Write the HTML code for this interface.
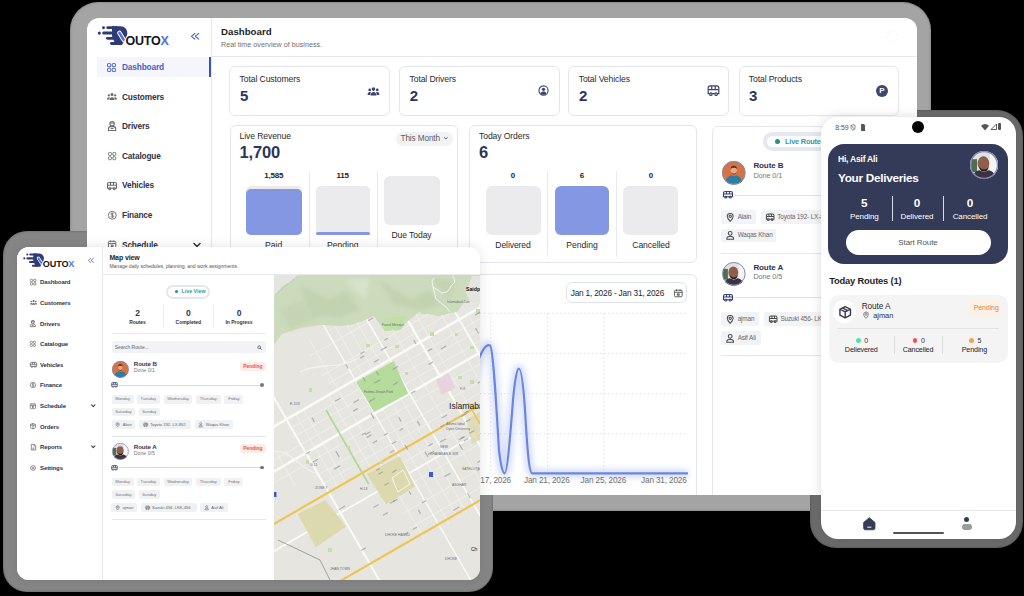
<!DOCTYPE html>
<html><head><meta charset="utf-8">
<style>
*{margin:0;padding:0;box-sizing:border-box}
html,body{width:1024px;height:596px;overflow:hidden;background:#000}
body{position:relative;font-family:"Liberation Sans",sans-serif;color:#222}
.a{position:absolute}
.t{position:absolute;line-height:1;white-space:nowrap}
.scr{position:absolute;overflow:hidden;background:#fff}
.in{position:absolute;left:0;top:0;width:1024px;height:596px}
.bz{position:absolute}
.card{position:absolute;border:1px solid #e4e6ee;border-radius:6px;background:#fff}
.hl{position:absolute;height:1px;background:#e8e9ef}
.vl{position:absolute;width:1px;background:#e8e9ef}
.chip{position:absolute;background:#f1f2f6;border-radius:2px}
svg{position:absolute;overflow:visible}
</style></head><body>

<!-- bezels -->
<div class="bz" style="left:69.5px;top:2px;width:861px;height:508.5px;border-radius:28px;background:#a4a4a4;box-shadow:inset 0 0 2.5px rgba(0,0,0,0.35)"></div>
<div class="bz" style="left:3px;top:231px;width:490px;height:361px;border-radius:24px;background:#868686;box-shadow:inset 0 0 2.5px rgba(0,0,0,0.35)"></div>
<div class="bz" style="left:810px;top:110px;width:213px;height:438px;border-radius:26px;background:#6c6c6c;box-shadow:inset 0 0 2.5px rgba(0,0,0,0.35)"></div>

<!-- TABLET -->
<div class="scr" id="tab" style="left:87px;top:18px;width:830px;height:477px;border-radius:12px">
<div class="in" style="left:-87px;top:-18px">
<div class="a" style="left:211.00px;top:18.00px;width:1.00px;height:477.00px;background:#e7e8ee;"></div>
<div class="a" style="left:211.00px;top:56.00px;width:706.00px;height:1.00px;background:#e7e8ee;"></div>
<svg style="left:96.00px;top:24.00px;" width="34" height="23" viewBox="96 24 34 23" preserveAspectRatio="none"><g fill="#2f3b78"><circle cx="103.5" cy="27.7" r="1.45"/><circle cx="99.3" cy="33.1" r="1.55"/><rect x="106.3" y="26.3" width="12" height="2.8" rx="1.4"/><rect x="102.2" y="31.6" width="12" height="3" rx="1.5"/><rect x="106" y="36.9" width="9" height="2.9" rx="1.45"/><rect x="110" y="42.1" width="9" height="2.9" rx="1.45"/><path d="M112 26.3H120.5C124.8 26.3 127.3 29.6 127.3 33.2C127.3 34.6 126.9 35.7 126.3 36.6L122 45H115.5L112 36Z"/></g><path d="M119.4 32.9L123.6 39.6" stroke="#fff" stroke-width="4.6" stroke-linecap="round"/><path d="M119.4 32.9L123.6 39.6" stroke="#4a6fe3" stroke-width="2.5" stroke-linecap="round"/></svg>
<div class="t" style="top:34.75px;font-size:12.5px;color:#151515;font-weight:bold;letter-spacing:-0.2px;left:125.40px;">OUTO<span style="color:#4f70e0">X</span></div>
<svg style="left:191.00px;top:33.20px;" width="8.2" height="6.6" viewBox="3 4 17 16" preserveAspectRatio="none"><g fill="none" stroke="#4a5fc1" stroke-width="2.3" stroke-linecap="round" stroke-linejoin="round"><path d="M11 5l-7 7 7 7M19 5l-7 7 7 7"/></g></svg>
<div class="t" style="top:26.65px;font-size:9.7px;color:#1e1e1e;font-weight:bold;left:221.00px;">Dashboard</div>
<div class="t" style="top:41.00px;font-size:7.2px;color:#707070;font-weight:normal;left:221.00px;">Real time overview of business.</div>
<div class="a" style="left:97.00px;top:57.00px;width:114.00px;height:20.00px;background:#f4f6fb;"></div>
<div class="a" style="left:208.50px;top:57.00px;width:2.50px;height:20.00px;background:#3d52b8;"></div>
<div class="t" style="top:62.95px;font-size:8.3px;color:#4a5fc1;font-weight:bold;letter-spacing:-0.15px;left:122.00px;">Dashboard</div>
<svg style="left:107.20px;top:62.60px;" width="9" height="9" viewBox="2 2 20 20" preserveAspectRatio="none"><g fill="none" stroke="#5a6fd0" stroke-width="2.3"><rect x="3" y="3" width="7.5" height="7.5" rx="3"/><rect x="13.5" y="3" width="7.5" height="7.5" rx="3"/><rect x="3" y="13.5" width="7.5" height="7.5" rx="3"/><rect x="13.5" y="13.5" width="7.5" height="7.5" rx="3"/></g></svg>
<div class="t" style="top:92.55px;font-size:8.3px;color:#2e3345;font-weight:bold;letter-spacing:-0.15px;left:122.00px;">Customers</div>
<svg style="left:107.00px;top:92.80px;" width="10" height="6.9" viewBox="1 4 22 15" preserveAspectRatio="none"><g fill="#6a6a6a"><circle cx="12" cy="7.5" r="3.3"/><circle cx="5" cy="9" r="2.5"/><circle cx="19" cy="9" r="2.5"/><path d="M6.5 19c0-3.5 2.5-6 5.5-6s5.5 2.5 5.5 6z"/><path d="M1 18c0-3 1.6-5 4-5 1 0 1.8.3 2.3.8C6.4 15 6 16.5 6 18z"/><path d="M23 18c0-3-1.6-5-4-5-1 0-1.8.3-2.3.8.9 1.2 1.3 2.7 1.3 4.2z"/></g></svg>
<div class="t" style="top:122.15px;font-size:8.3px;color:#2e3345;font-weight:bold;letter-spacing:-0.15px;left:122.00px;">Drivers</div>
<svg style="left:108.00px;top:121.10px;" width="8.2" height="10" viewBox="3.5 2.5 17 20.5" preserveAspectRatio="none"><g fill="none" stroke="#6a6a6a" stroke-width="2.3"><circle cx="12" cy="8" r="4.5"/><path d="M7.5 6.5h9"/><path d="M4.5 22v-3.5c0-2.5 2-4.5 4.5-4.5h6c2.5 0 4.5 2 4.5 4.5V22z"/><path d="M9 18h6"/></g></svg>
<div class="t" style="top:151.75px;font-size:8.3px;color:#2e3345;font-weight:bold;letter-spacing:-0.15px;left:122.00px;">Catalogue</div>
<svg style="left:107.80px;top:151.90px;" width="8.2" height="8.2" viewBox="2 2 20 20" preserveAspectRatio="none"><g fill="none" stroke="#6a6a6a" stroke-width="2.3"><rect x="3" y="3" width="7.5" height="7.5" rx="3"/><rect x="13.5" y="3" width="7.5" height="7.5" rx="3"/><rect x="3" y="13.5" width="7.5" height="7.5" rx="3"/><rect x="13.5" y="13.5" width="7.5" height="7.5" rx="3"/></g></svg>
<div class="t" style="top:181.35px;font-size:8.3px;color:#2e3345;font-weight:bold;letter-spacing:-0.15px;left:122.00px;">Vehicles</div>
<svg style="left:107.00px;top:182.00px;" width="10" height="8.2" viewBox="2 3.5 20 17.5" preserveAspectRatio="none"><g fill="none" stroke="#6a6a6a" stroke-width="2.3"><path d="M3 17V8c0-2 1.5-3.5 3.5-3.5h11C19.5 4.5 21 6 21 8v9z"/><path d="M3 10.5h18M9 4.5v6M15 4.5v6"/><circle cx="7.5" cy="18" r="2" fill="#fff"/><circle cx="16.5" cy="18" r="2" fill="#fff"/></g></svg>
<div class="t" style="top:210.95px;font-size:8.3px;color:#2e3345;font-weight:bold;letter-spacing:-0.15px;left:122.00px;">Finance</div>
<svg style="left:107.80px;top:211.00px;" width="8.6" height="8.6" viewBox="1.6 1.6 20.8 20.8" preserveAspectRatio="none"><g fill="none" stroke="#6a6a6a" stroke-width="2.3"><circle cx="12" cy="12" r="9.5"/><path d="M15 9c-.5-1.2-1.6-2-3-2-1.8 0-3 1-3 2.4 0 3.1 6 1.7 6 4.9 0 1.4-1.3 2.5-3 2.5-1.5 0-2.7-.8-3.1-2M12 5.5v13"/></g></svg>
<div class="t" style="top:240.55px;font-size:8.3px;color:#2e3345;font-weight:bold;letter-spacing:-0.15px;left:122.00px;">Schedule</div>
<svg style="left:108.00px;top:240.20px;" width="8.2" height="8.6" viewBox="2.5 2 19 20" preserveAspectRatio="none"><g fill="none" stroke="#6a6a6a" stroke-width="2.3"><rect x="3.5" y="5" width="17" height="16" rx="2.5"/><path d="M3.5 10h17M8 3v4M16 3v4"/><rect x="10" y="14" width="4" height="3"/></g></svg>
<svg style="left:193.00px;top:241.70px;" width="8" height="6" viewBox="4 6 16 12" preserveAspectRatio="none"><path d="M6 9l6 6 6-6" fill="none" stroke="#333" stroke-width="3" stroke-linecap="round" stroke-linejoin="round"/></svg>
<div class="a" style="left:229.30px;top:66.30px;width:160.50px;height:49.40px;background:#fff;border-radius:6px;border:1px solid #e3e5ed;"></div>
<div class="t" style="top:74.90px;font-size:8.6px;color:#2a2a2a;font-weight:normal;letter-spacing:-0.1px;left:239.60px;">Total Customers</div>
<div class="t" style="top:88.30px;font-size:15px;color:#2b3562;font-weight:bold;left:239.90px;">5</div>
<div class="a" style="left:399.20px;top:66.30px;width:160.50px;height:49.40px;background:#fff;border-radius:6px;border:1px solid #e3e5ed;"></div>
<div class="t" style="top:74.90px;font-size:8.6px;color:#2a2a2a;font-weight:normal;letter-spacing:-0.1px;left:409.50px;">Total Drivers</div>
<div class="t" style="top:88.30px;font-size:15px;color:#2b3562;font-weight:bold;left:409.80px;">2</div>
<div class="a" style="left:568.40px;top:66.30px;width:160.50px;height:49.40px;background:#fff;border-radius:6px;border:1px solid #e3e5ed;"></div>
<div class="t" style="top:74.90px;font-size:8.6px;color:#2a2a2a;font-weight:normal;letter-spacing:-0.1px;left:578.70px;">Total Vehicles</div>
<div class="t" style="top:88.30px;font-size:15px;color:#2b3562;font-weight:bold;left:579.00px;">2</div>
<div class="a" style="left:738.50px;top:66.30px;width:160.50px;height:49.40px;background:#fff;border-radius:6px;border:1px solid #e3e5ed;"></div>
<div class="t" style="top:74.90px;font-size:8.6px;color:#2a2a2a;font-weight:normal;letter-spacing:-0.1px;left:748.80px;">Total Products</div>
<div class="t" style="top:88.30px;font-size:15px;color:#2b3562;font-weight:bold;left:749.10px;">3</div>
<svg style="left:366.50px;top:86.00px;" width="13" height="10" viewBox="0 2 24 18" preserveAspectRatio="none"><g fill="#3a4470"><circle cx="12" cy="7.5" r="3.3"/><circle cx="5" cy="9" r="2.5"/><circle cx="19" cy="9" r="2.5"/><path d="M6.5 19c0-3.5 2.5-6 5.5-6s5.5 2.5 5.5 6z"/><path d="M1 18c0-3 1.6-5 4-5 1 0 1.8.3 2.3.8C6.4 15 6 16.5 6 18z"/><path d="M23 18c0-3-1.6-5-4-5-1 0-1.8.3-2.3.8.9 1.2 1.3 2.7 1.3 4.2z"/></g></svg>
<svg style="left:537.50px;top:85.00px;" width="11" height="11" viewBox="0 0 24 24" preserveAspectRatio="none"><circle cx="12" cy="12" r="10" fill="none" stroke="#3a4470" stroke-width="2.4"/><circle cx="12" cy="9.5" r="3.5" fill="#3a4470"/><path d="M5.5 18c1.5-3 3.8-4 6.5-4s5 1 6.5 4c-1.5 1.8-4 3-6.5 3s-5-1.2-6.5-3z" fill="#3a4470"/></svg>
<svg style="left:706.50px;top:85.00px;" width="13" height="11" viewBox="1 3 22 18" preserveAspectRatio="none"><g fill="none" stroke="#3a4470" stroke-width="2"><path d="M3 17V8c0-2 1.5-3.5 3.5-3.5h11C19.5 4.5 21 6 21 8v9z"/><path d="M3 10.5h18M9 4.5v6M15 4.5v6"/><circle cx="7.5" cy="18" r="2" fill="#fff"/><circle cx="16.5" cy="18" r="2" fill="#fff"/></g></svg>
<div class="a" style="left:876px;top:85px;width:12px;height:12px;border-radius:50%;background:#3d4673;color:#fff;font:bold 8px/12px 'Liberation Sans';text-align:center">P</div>
<div class="a" style="left:886px;top:31px;width:12px;height:12px;border-radius:50%;border:1px dashed #f6f6f6"></div>
<div class="a" style="left:229.80px;top:125.40px;width:228.70px;height:137.60px;background:#fff;border-radius:6px;border:1px solid #e3e5ed;"></div>
<div class="t" style="top:132.20px;font-size:8.6px;color:#2a2a2a;font-weight:normal;letter-spacing:-0.1px;left:239.50px;">Live Revenue</div>
<div class="t" style="top:144.15px;font-size:16.5px;color:#2b3562;font-weight:bold;letter-spacing:-0.2px;left:239.60px;">1,700</div>
<div class="a" style="left:396.00px;top:131.50px;width:57.00px;height:14.00px;background:#f1f2f5;border-radius:7px;"></div>
<div class="t" style="top:134.60px;font-size:8.2px;color:#5a5a5a;font-weight:normal;letter-spacing:-0.1px;left:400.50px;">This Month</div>
<svg style="left:443.60px;top:136.80px;" width="3.8" height="2.6" viewBox="4 6 16 12" preserveAspectRatio="none"><path d="M6 9l6 6 6-6" fill="none" stroke="#555" stroke-width="4" stroke-linecap="round" stroke-linejoin="round"/></svg>
<div class="a" style="left:309.00px;top:170.70px;width:1.00px;height:86.30px;background:#e8e9f0;"></div>
<div class="a" style="left:377.40px;top:170.70px;width:1.00px;height:86.30px;background:#e8e9f0;"></div>
<div class="t" style="top:172.10px;font-size:8px;color:#1e1e1e;font-weight:bold;letter-spacing:-0.2px;left:-26.30px;width:600px;text-align:center;">1,585</div>
<div class="t" style="top:172.10px;font-size:8px;color:#1e1e1e;font-weight:bold;letter-spacing:-0.2px;left:42.70px;width:600px;text-align:center;">115</div>
<div class="a" style="left:246.30px;top:186.00px;width:55.40px;height:48.60px;background:#efe9ea;border-radius:5px;"></div>
<div class="a" style="left:246.30px;top:188.80px;width:55.40px;height:45.80px;background:#8497e2;border-radius:5px;"></div>
<div class="a" style="left:316.00px;top:186.00px;width:54.00px;height:48.60px;background:#ebebee;border-radius:5px;"></div>
<div class="a" style="left:316.00px;top:231.80px;width:54.00px;height:2.80px;background:#8497e2;border-radius:1.5px;"></div>
<div class="a" style="left:384.00px;top:175.60px;width:55.50px;height:49.40px;background:#ebebee;border-radius:6px;"></div>
<div class="t" style="top:241.20px;font-size:8.6px;color:#2a2a2a;font-weight:normal;left:-26.30px;width:600px;text-align:center;">Paid</div>
<div class="t" style="top:241.20px;font-size:8.6px;color:#2a2a2a;font-weight:normal;left:42.70px;width:600px;text-align:center;">Pending</div>
<div class="t" style="top:230.50px;font-size:8.6px;color:#2a2a2a;font-weight:normal;letter-spacing:-0.1px;left:111.50px;width:600px;text-align:center;">Due Today</div>
<div class="a" style="left:468.50px;top:125.40px;width:228.50px;height:137.60px;background:#fff;border-radius:6px;border:1px solid #e3e5ed;"></div>
<div class="t" style="top:132.20px;font-size:8.6px;color:#2a2a2a;font-weight:normal;letter-spacing:-0.1px;left:479.00px;">Today Orders</div>
<div class="t" style="top:144.15px;font-size:16.5px;color:#2b3562;font-weight:bold;left:479.00px;">6</div>
<div class="a" style="left:547.30px;top:170.70px;width:1.00px;height:86.30px;background:#e8e9f0;"></div>
<div class="a" style="left:616.00px;top:170.70px;width:1.00px;height:86.30px;background:#e8e9f0;"></div>
<div class="t" style="top:172.10px;font-size:8px;color:#1e1e1e;font-weight:bold;left:213.00px;width:600px;text-align:center;">0</div>
<div class="t" style="top:172.10px;font-size:8px;color:#1e1e1e;font-weight:bold;left:282.00px;width:600px;text-align:center;">6</div>
<div class="t" style="top:172.10px;font-size:8px;color:#1e1e1e;font-weight:bold;left:351.00px;width:600px;text-align:center;">0</div>
<div class="a" style="left:485.60px;top:186.00px;width:55.40px;height:48.60px;background:#ebebee;border-radius:6px;"></div>
<div class="a" style="left:554.70px;top:186.00px;width:54.60px;height:48.60px;background:#8497e2;border-radius:6px;"></div>
<div class="a" style="left:623.40px;top:186.00px;width:54.90px;height:48.60px;background:#ebebee;border-radius:6px;"></div>
<div class="t" style="top:241.20px;font-size:8.6px;color:#2a2a2a;font-weight:normal;letter-spacing:-0.1px;left:213.00px;width:600px;text-align:center;">Delivered</div>
<div class="t" style="top:241.20px;font-size:8.6px;color:#2a2a2a;font-weight:normal;left:282.00px;width:600px;text-align:center;">Pending</div>
<div class="t" style="top:241.20px;font-size:8.6px;color:#2a2a2a;font-weight:normal;letter-spacing:-0.1px;left:351.00px;width:600px;text-align:center;">Cancelled</div>
<div class="a" style="left:229.80px;top:274.00px;width:467.50px;height:246.00px;background:#fff;border-radius:6px;border:1px solid #e3e5ed;"></div>
<div class="a" style="left:565.60px;top:282.00px;width:121.40px;height:21.40px;background:#fff;border-radius:6px;border:1px solid #e1e3ea;"></div>
<div class="t" style="top:289.05px;font-size:8.3px;color:#262626;font-weight:normal;letter-spacing:-0.2px;left:570.70px;">Jan 1, 2026 - Jan 31, 2026</div>
<svg style="left:673.80px;top:288.80px;" width="8.6" height="8.2" viewBox="2.5 2 19 20" preserveAspectRatio="none"><g fill="none" stroke="#555" stroke-width="2.2"><rect x="3.5" y="5" width="17" height="16" rx="2.5"/><path d="M3.5 10h17M8 3v4M16 3v4"/><rect x="10" y="14" width="4" height="3"/></g></svg>
<svg style="left:0.00px;top:0.00px;" width="1024" height="596" viewBox="0 0 1024 596" preserveAspectRatio="none"><line x1="240" y1="313.2" x2="688" y2="313.2" stroke="#dedfe6" stroke-width="1" stroke-dasharray="1.5 2.5"/><line x1="240" y1="353.4" x2="688" y2="353.4" stroke="#dedfe6" stroke-width="1" stroke-dasharray="1.5 2.5"/><line x1="240" y1="393.7" x2="688" y2="393.7" stroke="#dedfe6" stroke-width="1" stroke-dasharray="1.5 2.5"/><line x1="240" y1="433.7" x2="688" y2="433.7" stroke="#dedfe6" stroke-width="1" stroke-dasharray="1.5 2.5"/><line x1="264" y1="313" x2="264" y2="473" stroke="#dedfe6" stroke-width="1" stroke-dasharray="1.5 2.5"/><line x1="320" y1="313" x2="320" y2="473" stroke="#dedfe6" stroke-width="1" stroke-dasharray="1.5 2.5"/><line x1="377" y1="313" x2="377" y2="473" stroke="#dedfe6" stroke-width="1" stroke-dasharray="1.5 2.5"/><line x1="434" y1="313" x2="434" y2="473" stroke="#dedfe6" stroke-width="1" stroke-dasharray="1.5 2.5"/><line x1="490.7" y1="313" x2="490.7" y2="473" stroke="#dedfe6" stroke-width="1" stroke-dasharray="1.5 2.5"/><line x1="547.6" y1="313" x2="547.6" y2="473" stroke="#dedfe6" stroke-width="1" stroke-dasharray="1.5 2.5"/><line x1="603.7" y1="313" x2="603.7" y2="473" stroke="#dedfe6" stroke-width="1" stroke-dasharray="1.5 2.5"/><defs><filter id="glow" x="-20%" y="-20%" width="140%" height="140%"><feGaussianBlur stdDeviation="3"/></filter></defs><path d="M462 430 C470 390 476 362 482 352 C485 346 488 344.5 490 345.4 C493 347 496 400 499 450 C501 468 503 473.4 504.6 473.4 C507 473.4 510 440 513 400 C515 378 517 368.5 518.8 368.5 C521 368.5 523 380 525 410 C527 445 529 473.4 532.2 473.4 L688 473.4" fill="none" stroke="#c9d3f6" stroke-width="8" stroke-linejoin="round" filter="url(#glow)" opacity="0.8"/><path d="M462 430 C470 390 476 362 482 352 C485 346 488 344.5 490 345.4 C493 347 496 400 499 450 C501 468 503 473.4 504.6 473.4 C507 473.4 510 440 513 400 C515 378 517 368.5 518.8 368.5 C521 368.5 523 380 525 410 C527 445 529 473.4 532.2 473.4 L688 473.4" fill="none" stroke="#6a86e2" stroke-width="2.2" stroke-linejoin="round"/></svg>
<div class="t" style="top:476.80px;font-size:8.2px;color:#707070;font-weight:normal;letter-spacing:-0.15px;left:-89.00px;width:600px;text-align:right;">Jan 17, 2026</div>
<div class="t" style="top:476.80px;font-size:8.2px;color:#707070;font-weight:normal;letter-spacing:-0.15px;left:246.80px;width:600px;text-align:center;">Jan 21, 2026</div>
<div class="t" style="top:476.80px;font-size:8.2px;color:#707070;font-weight:normal;letter-spacing:-0.15px;left:303.40px;width:600px;text-align:center;">Jan 25, 2026</div>
<div class="t" style="top:476.80px;font-size:8.2px;color:#707070;font-weight:normal;letter-spacing:-0.15px;left:86.60px;width:600px;text-align:right;">Jan 31, 2026</div>
<div class="a" style="left:711.50px;top:125.60px;width:187.50px;height:394.40px;background:#fff;border-radius:6px;border:1px solid #e3e5ed;"></div>
<div class="a" style="left:763.00px;top:131.70px;width:87.00px;height:19.00px;background:#fff;border-radius:10px;border:4px solid #e5e7f1;"></div>
<div class="a" style="left:775.10px;top:138.50px;width:5.00px;height:5.00px;background:#2e8d89;border-radius:3px;"></div>
<div class="t" style="top:137.50px;font-size:7.4px;color:#3a9b96;font-weight:bold;letter-spacing:-0.2px;left:785.00px;">Live Route</div>
<svg style="left:721.9000000000001px;top:160.89999999999998px" width="23.6" height="23.6" viewBox="0 0 24 24"><defs><clipPath id="cb733172"><circle cx="12" cy="12" r="12"/></clipPath></defs><g clip-path="url(#cb733172)"><rect width="24" height="24" fill="#d8733f"/><path d="M3 26C3 18 6 15.5 9.5 14.5L12 15.5 14.5 14.5C18 15.5 21 18 21 26Z" fill="#2f7d9e"/><ellipse cx="12" cy="9.5" rx="3.1" ry="3.8" fill="#e2a98c"/><path d="M8.8 8.5C8.8 5.5 10.3 4.8 12 4.8S15.2 5.5 15.2 8.5C14.5 7.2 13.5 6.8 12 6.8S9.5 7.2 8.8 8.5Z" fill="#4a2e22"/><path d="M9.2 11C9.6 13 10.6 13.8 12 13.8S14.4 13 14.8 11C14.2 12.4 13.3 12.8 12 12.8S9.8 12.4 9.2 11Z" fill="#5a3a2a"/></g><circle cx="12" cy="12" r="11.5" fill="none" stroke="#7d8cc0" stroke-width="1"/></svg>
<div class="t" style="top:162.20px;font-size:8.0px;color:#2d3358;font-weight:bold;letter-spacing:-0.1px;left:753.40px;">Route B</div>
<div class="t" style="top:172.05px;font-size:7.3px;color:#777;font-weight:normal;letter-spacing:-0.1px;left:753.40px;">Done 0/1</div>
<svg style="left:722.80px;top:191.40px;" width="10" height="7.5" viewBox="2 3.5 20 17.5" preserveAspectRatio="none"><g fill="none" stroke="#3a4470" stroke-width="2.4"><path d="M3 17V8c0-2 1.5-3.5 3.5-3.5h11C19.5 4.5 21 6 21 8v9z"/><path d="M3 10.5h18M9 4.5v6M15 4.5v6"/><circle cx="7.5" cy="18" r="2" fill="#fff"/><circle cx="16.5" cy="18" r="2" fill="#fff"/></g></svg>
<div class="a" style="left:735.00px;top:194.50px;width:165.00px;height:1.00px;background:#e2e3e9;"></div>
<div class="a" style="left:721.20px;top:210.00px;width:34.40px;height:13.50px;background:#f2f3f6;border-radius:2px;"></div>
<svg style="left:726.40px;top:212.60px;" width="8.4" height="8.4" viewBox="2 2 20 20" preserveAspectRatio="none"><g fill="none" stroke="#4a4a4a" stroke-width="2.4"><path d="M12 22s-7-6.5-7-12a7 7 0 0 1 14 0c0 5.5-7 12-7 12z"/><circle cx="12" cy="10" r="2.8"/></g></svg>
<div class="t" style="top:213.70px;font-size:6.4px;color:#666;font-weight:normal;letter-spacing:-0.15px;left:737.70px;">Alain</div>
<div class="a" style="left:760.80px;top:210.00px;width:79.20px;height:13.50px;background:#f2f3f6;border-radius:2px;"></div>
<svg style="left:766.00px;top:212.60px;" width="8.4" height="8.4" viewBox="2 2 20 20" preserveAspectRatio="none"><g fill="none" stroke="#4a4a4a" stroke-width="2.4"><path d="M3 17V8c0-2 1.5-3.5 3.5-3.5h11C19.5 4.5 21 6 21 8v9z"/><path d="M3 10.5h18M9 4.5v6M15 4.5v6"/><circle cx="7.5" cy="18" r="2" fill="#fff"/><circle cx="16.5" cy="18" r="2" fill="#fff"/></g></svg>
<div class="t" style="top:213.70px;font-size:6.4px;color:#666;font-weight:normal;letter-spacing:-0.15px;left:777.30px;">Toyota 192- LX-852</div>
<div class="a" style="left:721.20px;top:228.70px;width:54.80px;height:13.50px;background:#f2f3f6;border-radius:2px;"></div>
<svg style="left:726.40px;top:231.30px;" width="8.4" height="8.4" viewBox="2 2 20 20" preserveAspectRatio="none"><g fill="none" stroke="#4a4a4a" stroke-width="2.4"><circle cx="12" cy="7.5" r="4.5"/><path d="M4 21.5v-1c0-3 2.5-5.5 5.5-5.5h5c3 0 5.5 2.5 5.5 5.5v1z"/></g></svg>
<div class="t" style="top:232.40px;font-size:6.4px;color:#666;font-weight:normal;letter-spacing:-0.15px;left:737.70px;">Waqas Khan</div>
<div class="a" style="left:721.00px;top:252.80px;width:179.00px;height:1.00px;background:#e6e7ec;"></div>
<svg style="left:721.9000000000001px;top:262.2px" width="23.6" height="23.6" viewBox="0 0 24 24"><defs><clipPath id="ca733274"><circle cx="12" cy="12" r="12"/></clipPath></defs><g clip-path="url(#ca733274)"><rect width="24" height="24" fill="#dfe3e0"/><rect x="1" y="7" width="5" height="11" fill="#4d6e50"/><rect x="17" y="2" width="7" height="20" fill="#f4f5f4"/><path d="M2 26C2 19 5 17 8 16.5L12 18 16 16.5C19 17 22 19 22 26Z" fill="#3a3344"/><ellipse cx="11.5" cy="10.8" rx="5" ry="6.2" fill="#8f5e4a"/><path d="M8 13C8.5 16.5 10 17.5 12 17.5S15.5 16.5 16 13C15 15 13.8 15.8 12 15.8S9 15 8 13Z" fill="#2a1e1a"/></g><circle cx="12" cy="12" r="11.5" fill="none" stroke="#8a86b8" stroke-width="1"/></svg>
<div class="t" style="top:263.50px;font-size:8.0px;color:#2d3358;font-weight:bold;letter-spacing:-0.1px;left:753.40px;">Route A</div>
<div class="t" style="top:273.35px;font-size:7.3px;color:#777;font-weight:normal;letter-spacing:-0.1px;left:753.40px;">Done 0/5</div>
<svg style="left:722.80px;top:293.80px;" width="10" height="7.5" viewBox="2 3.5 20 17.5" preserveAspectRatio="none"><g fill="none" stroke="#3a4470" stroke-width="2.4"><path d="M3 17V8c0-2 1.5-3.5 3.5-3.5h11C19.5 4.5 21 6 21 8v9z"/><path d="M3 10.5h18M9 4.5v6M15 4.5v6"/><circle cx="7.5" cy="18" r="2" fill="#fff"/><circle cx="16.5" cy="18" r="2" fill="#fff"/></g></svg>
<div class="a" style="left:735.00px;top:296.90px;width:165.00px;height:1.00px;background:#e2e3e9;"></div>
<div class="a" style="left:721.20px;top:312.40px;width:38.10px;height:13.50px;background:#f2f3f6;border-radius:2px;"></div>
<svg style="left:726.40px;top:315.00px;" width="8.4" height="8.4" viewBox="2 2 20 20" preserveAspectRatio="none"><g fill="none" stroke="#4a4a4a" stroke-width="2.4"><path d="M12 22s-7-6.5-7-12a7 7 0 0 1 14 0c0 5.5-7 12-7 12z"/><circle cx="12" cy="10" r="2.8"/></g></svg>
<div class="t" style="top:316.10px;font-size:6.4px;color:#666;font-weight:normal;letter-spacing:-0.15px;left:737.70px;">ajman</div>
<div class="a" style="left:764.00px;top:312.40px;width:86.00px;height:13.50px;background:#f2f3f6;border-radius:2px;"></div>
<svg style="left:769.20px;top:315.00px;" width="8.4" height="8.4" viewBox="2 2 20 20" preserveAspectRatio="none"><g fill="none" stroke="#4a4a4a" stroke-width="2.4"><path d="M3 17V8c0-2 1.5-3.5 3.5-3.5h11C19.5 4.5 21 6 21 8v9z"/><path d="M3 10.5h18M9 4.5v6M15 4.5v6"/><circle cx="7.5" cy="18" r="2" fill="#fff"/><circle cx="16.5" cy="18" r="2" fill="#fff"/></g></svg>
<div class="t" style="top:316.10px;font-size:6.4px;color:#666;font-weight:normal;letter-spacing:-0.15px;left:780.50px;">Suzuki 456- LKK-456</div>
<div class="a" style="left:721.20px;top:331.10px;width:39.60px;height:13.50px;background:#f2f3f6;border-radius:2px;"></div>
<svg style="left:726.40px;top:333.70px;" width="8.4" height="8.4" viewBox="2 2 20 20" preserveAspectRatio="none"><g fill="none" stroke="#4a4a4a" stroke-width="2.4"><circle cx="12" cy="7.5" r="4.5"/><path d="M4 21.5v-1c0-3 2.5-5.5 5.5-5.5h5c3 0 5.5 2.5 5.5 5.5v1z"/></g></svg>
<div class="t" style="top:334.80px;font-size:6.4px;color:#666;font-weight:normal;letter-spacing:-0.15px;left:737.70px;">Asif Ali</div>
<div class="a" style="left:721.00px;top:354.60px;width:179.00px;height:1.00px;background:#e6e7ec;"></div>
</div></div>

<!-- SMALL DEVICE -->
<div class="scr" id="sm" style="box-shadow:0 0 12px rgba(40,40,60,0.14);left:17px;top:247px;width:463px;height:333px;border-radius:12px">
<div class="in" style="left:-17px;top:-247px">
<svg style="left:0.00px;top:0.00px;" width="1024" height="596" viewBox="0 0 1024 596" preserveAspectRatio="none"><defs><clipPath id="mapc"><rect x="274" y="274.5" width="206" height="306"/></clipPath><clipPath id="lowc"><path d="M274 345L282 334 300 328 321 325 340 326 350 325 363 321 373.5 316 385 331 400 328 419 312 438 316 457 312 480 304V580H274Z"/></clipPath><filter id="blur1"><feGaussianBlur stdDeviation="2.2"/></filter></defs><g clip-path="url(#mapc)"><rect x="274" y="274" width="206" height="306" fill="#e6e5e0"/><path d="M274 296L290 277 300 274H480V300L470 302 466 300 457 312 438 316 419 312 400 328 385 331 373.5 316 363 321 350 325 340 326 321 325 300 328 282 334 274 345Z" fill="#cddbbd"/><g filter="url(#blur1)" opacity="0.55"><path d="M300 285L330 300 345 290 360 310 340 318 310 315Z" fill="#b9cca6"/><path d="M380 280L410 300 430 290 440 305 420 310 395 305Z" fill="#b9cca6"/><path d="M280 310L300 300 320 318 290 330Z" fill="#bfd0ab"/><path d="M345 280L370 278 365 300Z" fill="#e0e9d6"/><path d="M430 278L455 280 450 300Z" fill="#bccfa9"/></g><path d="M274 274H300L290 282 274 290Z" fill="#e4e5e0"/><path d="M472 276H480V300L470 302 466 292Z" fill="#e4e5e0"/><path d="M453 276L455 282 452 285 447 292 442 293 433 287 432 281 434 278M433 287L436 299 446 307 450 312" stroke="#f2f5ee" stroke-width="1" fill="none"/><path d="M385 318L405 316 402 330 384 331Z" fill="#bfe0a5"/><path d="M300 274L274 296" stroke="#9aa8b8" stroke-width="0.6" stroke-dasharray="1 1"/><defs><clipPath id="cityc"><polygon points="283.5,421.0 524.2,282.0 566.5,355.1 325.7,494.1" fill="#000" /><polygon points="302.9,342.7 495.2,231.7 524.2,282.0 331.9,393.0" fill="#000" /><polygon points="374.2,466.1 566.5,355.1 610.2,430.9 417.9,541.9" fill="#000" /><polygon points="249.4,466.0 294.5,440.0 314.5,474.7 269.4,500.7" fill="#000" /></clipPath></defs><g clip-path="url(#lowc)"><g clip-path="url(#cityc)"><line x1="156.3" y1="444.7" x2="502.7" y2="244.7" stroke="#f1f1ee" stroke-width="0.9"/><line x1="167.8" y1="464.6" x2="514.2" y2="264.6" stroke="#f1f1ee" stroke-width="0.9"/><line x1="172.8" y1="473.3" x2="519.2" y2="273.3" stroke="#f1f1ee" stroke-width="0.9"/><line x1="182.8" y1="490.6" x2="529.2" y2="290.6" stroke="#f1f1ee" stroke-width="0.9"/><line x1="187.3" y1="498.4" x2="533.7" y2="298.4" stroke="#f1f1ee" stroke-width="0.9"/><line x1="192.3" y1="507.1" x2="538.7" y2="307.1" stroke="#f1f1ee" stroke-width="0.9"/><line x1="202.3" y1="524.4" x2="548.7" y2="324.4" stroke="#f1f1ee" stroke-width="0.9"/><line x1="209.8" y1="537.4" x2="556.2" y2="337.4" stroke="#f1f1ee" stroke-width="0.9"/><line x1="214.8" y1="546.1" x2="561.2" y2="346.1" stroke="#f1f1ee" stroke-width="0.9"/><line x1="225.8" y1="565.1" x2="572.2" y2="365.1" stroke="#f1f1ee" stroke-width="0.9"/><line x1="236.8" y1="584.2" x2="583.2" y2="384.2" stroke="#f1f1ee" stroke-width="0.9"/><line x1="247.8" y1="603.2" x2="594.2" y2="403.2" stroke="#f1f1ee" stroke-width="0.9"/><line x1="255.8" y1="617.1" x2="602.2" y2="417.1" stroke="#f1f1ee" stroke-width="0.9"/><line x1="266.8" y1="636.1" x2="613.2" y2="436.1" stroke="#f1f1ee" stroke-width="0.9"/><line x1="272.8" y1="646.5" x2="619.2" y2="446.5" stroke="#f1f1ee" stroke-width="0.9"/><line x1="220.4" y1="355.8" x2="390.4" y2="650.2" stroke="#f1f1ee" stroke-width="0.9"/><line x1="251.6" y1="337.8" x2="421.6" y2="632.2" stroke="#f1f1ee" stroke-width="0.9"/><line x1="259.4" y1="333.3" x2="429.4" y2="627.7" stroke="#f1f1ee" stroke-width="0.9"/><line x1="284.5" y1="318.8" x2="454.5" y2="613.2" stroke="#f1f1ee" stroke-width="0.9"/><line x1="294.0" y1="313.3" x2="464.0" y2="607.7" stroke="#f1f1ee" stroke-width="0.9"/><line x1="319.1" y1="298.8" x2="489.1" y2="593.2" stroke="#f1f1ee" stroke-width="0.9"/><line x1="328.7" y1="293.3" x2="498.7" y2="587.7" stroke="#f1f1ee" stroke-width="0.9"/><line x1="337.3" y1="288.3" x2="507.3" y2="582.7" stroke="#f1f1ee" stroke-width="0.9"/><line x1="360.7" y1="274.8" x2="530.7" y2="569.2" stroke="#f1f1ee" stroke-width="0.9"/><line x1="384.9" y1="260.8" x2="554.9" y2="555.2" stroke="#f1f1ee" stroke-width="0.9"/><line x1="404.0" y1="249.8" x2="574.0" y2="544.2" stroke="#f1f1ee" stroke-width="0.9"/><line x1="423.9" y1="238.3" x2="593.9" y2="532.7" stroke="#f1f1ee" stroke-width="0.9"/><line x1="436.9" y1="230.8" x2="606.9" y2="525.2" stroke="#f1f1ee" stroke-width="0.9"/></g></g><g clip-path="url(#lowc)"><line x1="177.8" y1="482.0" x2="524.2" y2="282.0" stroke="#fafaf8" stroke-width="2.6"/><line x1="197.3" y1="515.7" x2="543.7" y2="315.7" stroke="#fafaf8" stroke-width="2.6"/><line x1="231.8" y1="575.5" x2="578.2" y2="375.5" stroke="#fafaf8" stroke-width="1.8"/><line x1="311.0" y1="303.5" x2="481.0" y2="597.9" stroke="#fafaf8" stroke-width="1.4"/><line x1="346.0" y1="283.3" x2="516.0" y2="577.7" stroke="#fafaf8" stroke-width="1.6"/><line x1="376.3" y1="265.8" x2="546.3" y2="560.2" stroke="#fafaf8" stroke-width="2.4"/><line x1="242.4" y1="343.1" x2="412.4" y2="637.5" stroke="#fafaf8" stroke-width="2"/><line x1="415.3" y1="243.3" x2="585.3" y2="537.7" stroke="#fafaf8" stroke-width="1.8"/><path d="M274 452C290 448 300 470 318 474" stroke="#f3f3f1" stroke-width="1.1" fill="none"/><path d="M300 372C318 362 340 370 358 358" stroke="#f3f3f1" stroke-width="1.2" fill="none"/><path d="M278 540L320 560 330 580" stroke="#5a5a5a" stroke-width="0.5" fill="none"/></g><path d="M356 382L393.7 361 408 393.7 374 412Z" fill="#b6dc9b"/><path d="M297.7 514L325.3 500 346 526.5 315.7 547.3Z" fill="#dcd9ae"/><path d="M366.8 474L400 456 415 486.4 386 504.4Z" fill="#dcd9ae"/><path d="M392 478L403 470 410 484 398 492Z" fill="none" stroke="#f5f5f0" stroke-width="1"/><path d="M466 420L480 412V440L472 444Z" fill="#dcd9ae" opacity="0.8"/><path d="M436 380L449 373 455 388 442 395Z" fill="#e6d3dc"/><line x1="326.1" y1="410.2" x2="368.6" y2="483.8" stroke="#a8d88e" stroke-width="1.6"/><line x1="220.0" y1="555.1" x2="566.5" y2="355.1" stroke="#eec553" stroke-width="2.2"/><line x1="261.3" y1="626.6" x2="607.7" y2="426.6" stroke="#eec553" stroke-width="2.2"/><line x1="468" y1="403" x2="480" y2="424" stroke="#eec553" stroke-width="1.6"/><rect x="395" y="345" width="4" height="3" fill="#c2dfa8"/><rect x="430" y="332" width="4" height="4" fill="#c2dfa8"/><rect x="405" y="372" width="3" height="3" fill="#c2dfa8"/><rect x="366" y="344" width="4" height="3" fill="#c2dfa8"/><rect x="458" y="376" width="4" height="3" fill="#c2dfa8"/><rect x="470" y="346" width="4" height="3" fill="#c2dfa8"/><rect x="421" y="311" width="5" height="3" fill="#c2dfa8"/><rect x="380" y="461" width="3" height="3" fill="#c2dfa8"/><rect x="328" y="548" width="4" height="4" fill="#c2dfa8"/><rect x="455" y="300" width="4" height="4" fill="#c2dfa8"/><rect x="470" y="380" width="4" height="4" fill="#c2dfa8"/><rect x="306" y="460" width="3" height="4" fill="#c2dfa8"/><rect x="309" y="388" width="3" height="4" fill="#c2dfa8"/><rect x="347" y="446" width="3" height="3" fill="#c2dfa8"/><rect x="455" y="333" width="3" height="3" fill="#c2dfa8"/><rect x="476" y="309" width="4" height="5" fill="#c2dfa8"/><text x="447" y="303" font-size="3.4" fill="#6d6d78" font-family="Liberation Sans">Islamabad Zoo</text><text x="382" y="326" font-size="3.4" fill="#6d6d78" font-family="Liberation Sans">Faisal Mosque</text><text x="364" y="393" font-size="3.4" fill="#6d6d78" font-family="Liberation Sans">Fatima Jinnah Park</text><text x="315" y="489" font-size="3.4" fill="#6d6d78" font-family="Liberation Sans">ZONE 7</text><text x="385" y="536" font-size="3.4" fill="#6d6d78" font-family="Liberation Sans">DHOKE HASSU</text><text x="445" y="560" font-size="3.4" fill="#6d6d78" font-family="Liberation Sans">DHOKE</text><text x="462" y="470" font-size="3.4" fill="#6d6d78" font-family="Liberation Sans">SATELLITE</text><text x="452" y="486" font-size="3.4" fill="#6d6d78" font-family="Liberation Sans">ASGHAR</text><text x="440" y="448" font-size="3.4" fill="#6d6d78" font-family="Liberation Sans">NEW</text><text x="430" y="455" font-size="3.4" fill="#6d6d78" font-family="Liberation Sans">KHAYABAN-E-SIR</text><text x="446" y="425" font-size="3.4" fill="#6d6d78" font-family="Liberation Sans">Allama Iqbal</text><text x="446" y="430" font-size="3.4" fill="#6d6d78" font-family="Liberation Sans">Open University</text><text x="290" y="405" font-size="3.4" fill="#6d6d78" font-family="Liberation Sans">E-11/3</text><text x="310" y="466" font-size="3.4" fill="#6d6d78" font-family="Liberation Sans">G-11</text><text x="360" y="490" font-size="3.4" fill="#6d6d78" font-family="Liberation Sans">H-13</text><text x="460" y="390" font-size="3.4" fill="#6d6d78" font-family="Liberation Sans">F-8</text><text x="330" y="570" font-size="3.4" fill="#6d6d78" font-family="Liberation Sans">JHAN TOWN</text><g clip-path="url(#lowc)"><rect x="459.7" y="443.7" width="6.8" height="1.2" fill="#8c8c94" opacity="0.6" transform="rotate(60 459.7 443.7)"/><rect x="312.4" y="461.7" width="5.9" height="1.2" fill="#8c8c94" opacity="0.6" transform="rotate(-30 312.4 461.7)"/><rect x="377.0" y="371.3" width="4.3" height="1.2" fill="#8c8c94" opacity="0.6" transform="rotate(60 377.0 371.3)"/><rect x="384.2" y="484.7" width="4.8" height="1.2" fill="#8c8c94" opacity="0.6" transform="rotate(-30 384.2 484.7)"/><rect x="373.2" y="507.0" width="5.9" height="1.2" fill="#8c8c94" opacity="0.6" transform="rotate(-30 373.2 507.0)"/><rect x="360.2" y="353.3" width="4.6" height="1.2" fill="#8c8c94" opacity="0.6" transform="rotate(-30 360.2 353.3)"/><rect x="403.8" y="534.3" width="4.9" height="1.2" fill="#8c8c94" opacity="0.6" transform="rotate(-30 403.8 534.3)"/><rect x="414.2" y="339.7" width="4.6" height="1.2" fill="#8c8c94" opacity="0.6" transform="rotate(60 414.2 339.7)"/><rect x="305.6" y="453.4" width="4.8" height="1.2" fill="#8c8c94" opacity="0.6" transform="rotate(-30 305.6 453.4)"/><rect x="409.6" y="490.9" width="4.0" height="1.2" fill="#8c8c94" opacity="0.6" transform="rotate(60 409.6 490.9)"/><rect x="428.2" y="363.9" width="5.1" height="1.2" fill="#8c8c94" opacity="0.6" transform="rotate(-30 428.2 363.9)"/><rect x="391.8" y="471.9" width="5.4" height="1.2" fill="#8c8c94" opacity="0.6" transform="rotate(-30 391.8 471.9)"/><rect x="404.1" y="309.7" width="6.8" height="1.2" fill="#8c8c94" opacity="0.6" transform="rotate(-30 404.1 309.7)"/><rect x="371.4" y="412.8" width="6.4" height="1.2" fill="#8c8c94" opacity="0.6" transform="rotate(60 371.4 412.8)"/><rect x="391.4" y="443.5" width="5.4" height="1.2" fill="#8c8c94" opacity="0.6" transform="rotate(-30 391.4 443.5)"/><rect x="464.2" y="412.4" width="4.4" height="1.2" fill="#8c8c94" opacity="0.6" transform="rotate(-30 464.2 412.4)"/><rect x="392.8" y="501.1" width="5.0" height="1.2" fill="#8c8c94" opacity="0.6" transform="rotate(-30 392.8 501.1)"/><rect x="383.5" y="435.0" width="4.3" height="1.2" fill="#8c8c94" opacity="0.6" transform="rotate(-30 383.5 435.0)"/><rect x="389.7" y="452.3" width="5.0" height="1.2" fill="#8c8c94" opacity="0.6" transform="rotate(-30 389.7 452.3)"/><rect x="353.2" y="402.1" width="6.4" height="1.2" fill="#8c8c94" opacity="0.6" transform="rotate(-30 353.2 402.1)"/><rect x="458.3" y="439.5" width="7.0" height="1.2" fill="#8c8c94" opacity="0.6" transform="rotate(-30 458.3 439.5)"/><rect x="363.5" y="376.9" width="5.0" height="1.2" fill="#8c8c94" opacity="0.6" transform="rotate(60 363.5 376.9)"/><rect x="375.9" y="470.0" width="4.2" height="1.2" fill="#8c8c94" opacity="0.6" transform="rotate(-30 375.9 470.0)"/><rect x="444.1" y="476.1" width="6.9" height="1.2" fill="#8c8c94" opacity="0.6" transform="rotate(-30 444.1 476.1)"/><rect x="384.0" y="339.7" width="4.3" height="1.2" fill="#8c8c94" opacity="0.6" transform="rotate(-30 384.0 339.7)"/><rect x="359.9" y="357.6" width="4.9" height="1.2" fill="#8c8c94" opacity="0.6" transform="rotate(-30 359.9 357.6)"/><rect x="452.9" y="510.0" width="6.9" height="1.2" fill="#8c8c94" opacity="0.6" transform="rotate(-30 452.9 510.0)"/><rect x="399.3" y="417.0" width="5.0" height="1.2" fill="#8c8c94" opacity="0.6" transform="rotate(60 399.3 417.0)"/><rect x="361.7" y="434.4" width="4.3" height="1.2" fill="#8c8c94" opacity="0.6" transform="rotate(-30 361.7 434.4)"/><rect x="477.3" y="382.6" width="5.9" height="1.2" fill="#8c8c94" opacity="0.6" transform="rotate(-30 477.3 382.6)"/><rect x="392.7" y="384.5" width="5.5" height="1.2" fill="#8c8c94" opacity="0.6" transform="rotate(-30 392.7 384.5)"/><rect x="417.9" y="420.8" width="5.1" height="1.2" fill="#8c8c94" opacity="0.6" transform="rotate(60 417.9 420.8)"/><rect x="465.8" y="421.3" width="5.1" height="1.2" fill="#8c8c94" opacity="0.6" transform="rotate(-30 465.8 421.3)"/><rect x="427.5" y="350.5" width="4.8" height="1.2" fill="#8c8c94" opacity="0.6" transform="rotate(-30 427.5 350.5)"/><rect x="382.7" y="514.8" width="5.6" height="1.2" fill="#8c8c94" opacity="0.6" transform="rotate(-30 382.7 514.8)"/><rect x="378.2" y="473.7" width="4.9" height="1.2" fill="#8c8c94" opacity="0.6" transform="rotate(-30 378.2 473.7)"/><rect x="428.1" y="445.4" width="5.0" height="1.2" fill="#8c8c94" opacity="0.6" transform="rotate(-30 428.1 445.4)"/><rect x="463.5" y="440.5" width="5.1" height="1.2" fill="#8c8c94" opacity="0.6" transform="rotate(-30 463.5 440.5)"/><rect x="380.6" y="349.7" width="6.8" height="1.2" fill="#8c8c94" opacity="0.6" transform="rotate(-30 380.6 349.7)"/><rect x="425.4" y="451.3" width="6.0" height="1.2" fill="#8c8c94" opacity="0.6" transform="rotate(60 425.4 451.3)"/><rect x="405.5" y="444.7" width="5.5" height="1.2" fill="#8c8c94" opacity="0.6" transform="rotate(60 405.5 444.7)"/><rect x="476.0" y="327.8" width="6.3" height="1.2" fill="#8c8c94" opacity="0.6" transform="rotate(60 476.0 327.8)"/><rect x="460.2" y="438.2" width="4.6" height="1.2" fill="#8c8c94" opacity="0.6" transform="rotate(-30 460.2 438.2)"/><rect x="440.1" y="426.5" width="4.7" height="1.2" fill="#8c8c94" opacity="0.6" transform="rotate(-30 440.1 426.5)"/><rect x="460.6" y="416.2" width="7.0" height="1.2" fill="#8c8c94" opacity="0.6" transform="rotate(-30 460.6 416.2)"/><rect x="410.6" y="392.9" width="5.1" height="1.2" fill="#8c8c94" opacity="0.6" transform="rotate(-30 410.6 392.9)"/><rect x="441.5" y="417.4" width="6.2" height="1.2" fill="#8c8c94" opacity="0.6" transform="rotate(-30 441.5 417.4)"/><rect x="369.0" y="401.1" width="6.6" height="1.2" fill="#8c8c94" opacity="0.6" transform="rotate(-30 369.0 401.1)"/><rect x="468.0" y="492.9" width="5.8" height="1.2" fill="#8c8c94" opacity="0.6" transform="rotate(60 468.0 492.9)"/><rect x="333.9" y="468.6" width="6.9" height="1.2" fill="#8c8c94" opacity="0.6" transform="rotate(-30 333.9 468.6)"/><rect x="353.0" y="410.6" width="5.3" height="1.2" fill="#8c8c94" opacity="0.6" transform="rotate(-30 353.0 410.6)"/><rect x="346.2" y="363.8" width="5.1" height="1.2" fill="#8c8c94" opacity="0.6" transform="rotate(60 346.2 363.8)"/><rect x="373.6" y="361.8" width="5.8" height="1.2" fill="#8c8c94" opacity="0.6" transform="rotate(-30 373.6 361.8)"/><rect x="421.5" y="502.5" width="5.1" height="1.2" fill="#8c8c94" opacity="0.6" transform="rotate(-30 421.5 502.5)"/><rect x="418.9" y="509.6" width="4.4" height="1.2" fill="#8c8c94" opacity="0.6" transform="rotate(60 418.9 509.6)"/><rect x="476.7" y="470.1" width="5.3" height="1.2" fill="#8c8c94" opacity="0.6" transform="rotate(-30 476.7 470.1)"/><rect x="427.6" y="454.1" width="6.9" height="1.2" fill="#8c8c94" opacity="0.6" transform="rotate(-30 427.6 454.1)"/><rect x="412.5" y="528.9" width="4.8" height="1.2" fill="#8c8c94" opacity="0.6" transform="rotate(-30 412.5 528.9)"/><rect x="360.9" y="550.0" width="5.5" height="1.2" fill="#8c8c94" opacity="0.6" transform="rotate(-30 360.9 550.0)"/><rect x="364.8" y="434.2" width="6.0" height="1.2" fill="#8c8c94" opacity="0.6" transform="rotate(-30 364.8 434.2)"/><rect x="474.9" y="314.5" width="6.3" height="1.2" fill="#8c8c94" opacity="0.6" transform="rotate(-30 474.9 314.5)"/><rect x="392.5" y="368.9" width="6.3" height="1.2" fill="#8c8c94" opacity="0.6" transform="rotate(-30 392.5 368.9)"/><rect x="334.8" y="400.8" width="6.2" height="1.2" fill="#8c8c94" opacity="0.6" transform="rotate(-30 334.8 400.8)"/><rect x="366.3" y="437.1" width="5.6" height="1.2" fill="#8c8c94" opacity="0.6" transform="rotate(-30 366.3 437.1)"/><rect x="312.5" y="417.3" width="5.0" height="1.2" fill="#8c8c94" opacity="0.6" transform="rotate(60 312.5 417.3)"/><rect x="372.5" y="442.6" width="5.0" height="1.2" fill="#8c8c94" opacity="0.6" transform="rotate(-30 372.5 442.6)"/><rect x="439.9" y="441.5" width="6.7" height="1.2" fill="#8c8c94" opacity="0.6" transform="rotate(-30 439.9 441.5)"/><rect x="367.9" y="320.3" width="5.8" height="1.2" fill="#8c8c94" opacity="0.6" transform="rotate(-30 367.9 320.3)"/><rect x="477.1" y="461.9" width="5.4" height="1.2" fill="#8c8c94" opacity="0.6" transform="rotate(-30 477.1 461.9)"/><rect x="469.2" y="432.8" width="5.4" height="1.2" fill="#8c8c94" opacity="0.6" transform="rotate(-30 469.2 432.8)"/><rect x="440.6" y="348.4" width="6.1" height="1.2" fill="#8c8c94" opacity="0.6" transform="rotate(-30 440.6 348.4)"/><rect x="374.0" y="382.7" width="6.7" height="1.2" fill="#8c8c94" opacity="0.6" transform="rotate(-30 374.0 382.7)"/><rect x="336.4" y="451.0" width="6.7" height="1.2" fill="#8c8c94" opacity="0.6" transform="rotate(60 336.4 451.0)"/><rect x="399.3" y="429.9" width="4.2" height="1.2" fill="#8c8c94" opacity="0.6" transform="rotate(-30 399.3 429.9)"/><rect x="389.6" y="503.0" width="6.0" height="1.2" fill="#8c8c94" opacity="0.6" transform="rotate(-30 389.6 503.0)"/><rect x="338.7" y="508.9" width="7.0" height="1.2" fill="#8c8c94" opacity="0.6" transform="rotate(-30 338.7 508.9)"/><rect x="402.5" y="308.6" width="4.7" height="1.2" fill="#8c8c94" opacity="0.6" transform="rotate(-30 402.5 308.6)"/></g><text x="449" y="408.5" font-size="8.6" fill="#1a1a1a" font-family="Liberation Sans">Islamabad</text><text x="466" y="291" font-size="5.2" fill="#111" font-family="Liberation Sans" font-weight="bold">Saidpur</text><text x="471" y="551" font-size="5" fill="#111" font-family="Liberation Sans">Ch</text><rect x="274" y="492" width="2.5" height="5" fill="#3a5bd0"/><rect x="429" y="472" width="4" height="5" fill="#3a5bd0"/></g></svg>
<div class="a" style="left:17.00px;top:247.00px;width:85.50px;height:333.00px;background:#fff;"></div>
<div class="a" style="left:102.50px;top:274.50px;width:171.50px;height:305.50px;background:#fff;"></div>
<div class="a" style="left:102.50px;top:247.00px;width:377.50px;height:27.50px;background:#fff;"></div>
<div class="a" style="left:102.00px;top:247.00px;width:1.00px;height:333.00px;background:#e8e9ef;"></div>
<div class="a" style="left:102.50px;top:274.00px;width:377.50px;height:1.00px;background:#e8e9ef;"></div>
<svg style="left:21.80px;top:252.40px;" width="23.8" height="16.1" viewBox="96 24 34 23" preserveAspectRatio="none"><g fill="#2f3b78"><circle cx="103.5" cy="27.7" r="1.45"/><circle cx="99.3" cy="33.1" r="1.55"/><rect x="106.3" y="26.3" width="12" height="2.8" rx="1.4"/><rect x="102.2" y="31.6" width="12" height="3" rx="1.5"/><rect x="106" y="36.9" width="9" height="2.9" rx="1.45"/><rect x="110" y="42.1" width="9" height="2.9" rx="1.45"/><path d="M112 26.3H120.5C124.8 26.3 127.3 29.6 127.3 33.2C127.3 34.6 126.9 35.7 126.3 36.6L122 45H115.5L112 36Z"/></g><path d="M119.4 32.9L123.6 39.6" stroke="#fff" stroke-width="4.6" stroke-linecap="round"/><path d="M119.4 32.9L123.6 39.6" stroke="#4a6fe3" stroke-width="2.5" stroke-linecap="round"/></svg>
<div class="t" style="top:259.55px;font-size:9.1px;color:#151515;font-weight:bold;letter-spacing:-0.15px;left:42.80px;">OUTO<span style="color:#4f70e0">X</span></div>
<svg style="left:88.40px;top:258.40px;" width="5.8" height="4.8" viewBox="3 4 17 16" preserveAspectRatio="none"><g fill="none" stroke="#4a5fc1" stroke-width="2.4" stroke-linecap="round" stroke-linejoin="round"><path d="M11 5l-7 7 7 7M19 5l-7 7 7 7"/></g></svg>
<div class="t" style="top:254.40px;font-size:7px;color:#1e1e1e;font-weight:bold;letter-spacing:-0.1px;left:109.40px;">Map view</div>
<div class="t" style="top:264.35px;font-size:5.1px;color:#555;font-weight:normal;letter-spacing:-0.05px;left:109.40px;">Manage daily schedules, planning, and work assignments.</div>
<div class="t" style="top:279.00px;font-size:6px;color:#2e3345;font-weight:bold;letter-spacing:-0.1px;left:40.00px;">Dashboard</div>
<svg style="left:30.05px;top:278.85px;" width="6.3" height="6.3" viewBox="2 2 20 20" preserveAspectRatio="none"><g fill="none" stroke="#666" stroke-width="2.4"><rect x="3" y="3" width="7.5" height="7.5" rx="3"/><rect x="13.5" y="3" width="7.5" height="7.5" rx="3"/><rect x="3" y="13.5" width="7.5" height="7.5" rx="3"/><rect x="13.5" y="13.5" width="7.5" height="7.5" rx="3"/></g></svg>
<div class="t" style="top:299.80px;font-size:6px;color:#2e3345;font-weight:bold;letter-spacing:-0.1px;left:40.00px;">Customers</div>
<svg style="left:29.70px;top:300.40px;" width="7" height="4.8" viewBox="1 4 22 15" preserveAspectRatio="none"><g fill="#666"><circle cx="12" cy="7.5" r="3.3"/><circle cx="5" cy="9" r="2.5"/><circle cx="19" cy="9" r="2.5"/><path d="M6.5 19c0-3.5 2.5-6 5.5-6s5.5 2.5 5.5 6z"/><path d="M1 18c0-3 1.6-5 4-5 1 0 1.8.3 2.3.8C6.4 15 6 16.5 6 18z"/><path d="M23 18c0-3-1.6-5-4-5-1 0-1.8.3-2.3.8.9 1.2 1.3 2.7 1.3 4.2z"/></g></svg>
<div class="t" style="top:320.50px;font-size:6px;color:#2e3345;font-weight:bold;letter-spacing:-0.1px;left:40.00px;">Drivers</div>
<svg style="left:30.35px;top:320.00px;" width="5.7" height="7" viewBox="3.5 2.5 17 20.5" preserveAspectRatio="none"><g fill="none" stroke="#666" stroke-width="2.4"><circle cx="12" cy="8" r="4.5"/><path d="M7.5 6.5h9"/><path d="M4.5 22v-3.5c0-2.5 2-4.5 4.5-4.5h6c2.5 0 4.5 2 4.5 4.5V22z"/><path d="M9 18h6"/></g></svg>
<div class="t" style="top:341.00px;font-size:6px;color:#2e3345;font-weight:bold;letter-spacing:-0.1px;left:40.00px;">Catalogue</div>
<svg style="left:30.30px;top:341.10px;" width="5.8" height="5.8" viewBox="2 2 20 20" preserveAspectRatio="none"><g fill="none" stroke="#666" stroke-width="2.4"><rect x="3" y="3" width="7.5" height="7.5" rx="3"/><rect x="13.5" y="3" width="7.5" height="7.5" rx="3"/><rect x="3" y="13.5" width="7.5" height="7.5" rx="3"/><rect x="13.5" y="13.5" width="7.5" height="7.5" rx="3"/></g></svg>
<div class="t" style="top:361.80px;font-size:6px;color:#2e3345;font-weight:bold;letter-spacing:-0.1px;left:40.00px;">Vehicles</div>
<svg style="left:29.70px;top:361.95px;" width="7" height="5.7" viewBox="2 3.5 20 17.5" preserveAspectRatio="none"><g fill="none" stroke="#666" stroke-width="2.4"><path d="M3 17V8c0-2 1.5-3.5 3.5-3.5h11C19.5 4.5 21 6 21 8v9z"/><path d="M3 10.5h18M9 4.5v6M15 4.5v6"/><circle cx="7.5" cy="18" r="2" fill="#fff"/><circle cx="16.5" cy="18" r="2" fill="#fff"/></g></svg>
<div class="t" style="top:382.30px;font-size:6px;color:#2e3345;font-weight:bold;letter-spacing:-0.1px;left:40.00px;">Finance</div>
<svg style="left:30.20px;top:382.30px;" width="6" height="6" viewBox="1.6 1.6 20.8 20.8" preserveAspectRatio="none"><g fill="none" stroke="#666" stroke-width="2.4"><circle cx="12" cy="12" r="9.5"/><path d="M15 9c-.5-1.2-1.6-2-3-2-1.8 0-3 1-3 2.4 0 3.1 6 1.7 6 4.9 0 1.4-1.3 2.5-3 2.5-1.5 0-2.7-.8-3.1-2M12 5.5v13"/></g></svg>
<div class="t" style="top:402.80px;font-size:6px;color:#2e3345;font-weight:bold;letter-spacing:-0.1px;left:40.00px;">Schedule</div>
<svg style="left:30.30px;top:402.80px;" width="5.8" height="6" viewBox="2.5 2 19 20" preserveAspectRatio="none"><g fill="none" stroke="#666" stroke-width="2.4"><rect x="3.5" y="5" width="17" height="16" rx="2.5"/><path d="M3.5 10h17M8 3v4M16 3v4"/><rect x="10" y="14" width="4" height="3"/></g></svg>
<div class="t" style="top:423.50px;font-size:6px;color:#2e3345;font-weight:bold;letter-spacing:-0.1px;left:40.00px;">Orders</div>
<svg style="left:30.20px;top:423.35px;" width="6" height="6.3" viewBox="2 1.5 20 21" preserveAspectRatio="none"><g fill="none" stroke="#666" stroke-width="2.4" stroke-linejoin="round"><path d="M12 2.5l8.5 4.5v10L12 21.5 3.5 17V7z"/><path d="M3.5 7L12 11.5 20.5 7M12 11.5v10M7.5 4.8l8.5 4.5"/></g></svg>
<div class="t" style="top:444.20px;font-size:6px;color:#2e3345;font-weight:bold;letter-spacing:-0.1px;left:40.00px;">Reports</div>
<svg style="left:30.70px;top:444.05px;" width="5" height="6.3" viewBox="4 2 16 20" preserveAspectRatio="none"><g fill="none" stroke="#666" stroke-width="2.4"><path d="M5 3h9l5 5v13H5z"/><path d="M14 3v5h5M9 15h6M9 18h4"/></g></svg>
<div class="t" style="top:464.70px;font-size:6px;color:#2e3345;font-weight:bold;letter-spacing:-0.1px;left:40.00px;">Settings</div>
<svg style="left:30.10px;top:464.60px;" width="6.2" height="6.2" viewBox="1.5 1.5 21 21" preserveAspectRatio="none"><g fill="none" stroke="#666" stroke-width="2.4"><circle cx="12" cy="12" r="3"/><path d="M12 2.5l2 2.5 3-.8.8 3 2.7 1.6-1.3 2.7 1.3 2.7-2.7 1.6-.8 3-3-.8-2 2.5-2-2.5-3 .8-.8-3-2.7-1.6L4 12 2.7 9.3 5.4 7.7l.8-3 3 .8z"/></g></svg>
<svg style="left:90.50px;top:404.00px;" width="4.5" height="3.5" viewBox="4 6 16 12" preserveAspectRatio="none"><path d="M6 9l6 6 6-6" fill="none" stroke="#333" stroke-width="3.5" stroke-linecap="round" stroke-linejoin="round"/></svg>
<svg style="left:90.50px;top:445.40px;" width="4.5" height="3.5" viewBox="4 6 16 12" preserveAspectRatio="none"><path d="M6 9l6 6 6-6" fill="none" stroke="#333" stroke-width="3.5" stroke-linecap="round" stroke-linejoin="round"/></svg>
<div class="a" style="left:166.40px;top:285.00px;width:44.00px;height:13.70px;background:#fff;border-radius:7px;border:2.8px solid #e4e6f1;"></div>
<div class="a" style="left:175.30px;top:290.30px;width:3.20px;height:3.20px;background:#2e8d89;border-radius:2px;"></div>
<div class="t" style="top:289.30px;font-size:5.4px;color:#3a9b96;font-weight:bold;letter-spacing:-0.05px;left:181.50px;">Live View</div>
<div class="t" style="top:308.95px;font-size:8.5px;color:#2b3562;font-weight:bold;left:-162.50px;width:600px;text-align:center;">2</div>
<div class="t" style="top:319.50px;font-size:5px;color:#333;font-weight:bold;letter-spacing:-0.05px;left:-162.50px;width:600px;text-align:center;">Routes</div>
<div class="t" style="top:308.95px;font-size:8.5px;color:#2b3562;font-weight:bold;left:-111.70px;width:600px;text-align:center;">0</div>
<div class="t" style="top:319.50px;font-size:5px;color:#333;font-weight:bold;letter-spacing:-0.05px;left:-111.70px;width:600px;text-align:center;">Completed</div>
<div class="t" style="top:308.95px;font-size:8.5px;color:#2b3562;font-weight:bold;left:-61.00px;width:600px;text-align:center;">0</div>
<div class="t" style="top:319.50px;font-size:5px;color:#333;font-weight:bold;letter-spacing:-0.05px;left:-61.00px;width:600px;text-align:center;">In Progress</div>
<div class="a" style="left:163.00px;top:305.00px;width:0.70px;height:22.00px;background:#ebecf0;"></div>
<div class="a" style="left:213.30px;top:305.00px;width:0.70px;height:22.00px;background:#ebecf0;"></div>
<div class="a" style="left:111.70px;top:333.00px;width:154.30px;height:0.70px;background:#ebecf0;"></div>
<div class="a" style="left:111.70px;top:340.70px;width:154.30px;height:12.70px;background:#f2f3f7;border-radius:3px;"></div>
<div class="t" style="top:344.70px;font-size:5px;color:#666;font-weight:normal;letter-spacing:-0.05px;left:114.70px;">Search Route...</div>
<svg style="left:256.50px;top:344.70px;" width="5" height="5" viewBox="0 0 24 24" preserveAspectRatio="none"><g fill="none" stroke="#333" stroke-width="3"><circle cx="10.5" cy="10.5" r="6.5"/><path d="M15.5 15.5L21 21" stroke-linecap="round"/></g></svg>
<svg style="left:111.6px;top:360.6px" width="16.8" height="16.8" viewBox="0 0 24 24"><defs><clipPath id="cb120369"><circle cx="12" cy="12" r="12"/></clipPath></defs><g clip-path="url(#cb120369)"><rect width="24" height="24" fill="#d8733f"/><path d="M3 26C3 18 6 15.5 9.5 14.5L12 15.5 14.5 14.5C18 15.5 21 18 21 26Z" fill="#2f7d9e"/><ellipse cx="12" cy="9.5" rx="3.1" ry="3.8" fill="#e2a98c"/><path d="M8.8 8.5C8.8 5.5 10.3 4.8 12 4.8S15.2 5.5 15.2 8.5C14.5 7.2 13.5 6.8 12 6.8S9.5 7.2 8.8 8.5Z" fill="#4a2e22"/><path d="M9.2 11C9.6 13 10.6 13.8 12 13.8S14.4 13 14.8 11C14.2 12.4 13.3 12.8 12 12.8S9.8 12.4 9.2 11Z" fill="#5a3a2a"/></g><circle cx="12" cy="12" r="11.5" fill="none" stroke="#7d8cc0" stroke-width="1"/></svg>
<div class="t" style="top:361.10px;font-size:6.2px;color:#2d3358;font-weight:bold;letter-spacing:-0.1px;left:133.80px;">Route B</div>
<div class="t" style="top:368.35px;font-size:5.3px;color:#777;font-weight:normal;letter-spacing:-0.05px;left:133.80px;">Done 0/1</div>
<div class="a" style="left:240.20px;top:361.60px;width:25.40px;height:9.20px;background:#fdebe8;border-radius:3px;"></div>
<div class="t" style="top:363.70px;font-size:5px;color:#e0603f;font-weight:bold;letter-spacing:-0.05px;left:-47.10px;width:600px;text-align:center;">Pending</div>
<svg style="left:110.50px;top:382.10px;" width="7" height="5.6" viewBox="1 3 22 18" preserveAspectRatio="none"><g fill="none" stroke="#3a4470" stroke-width="2.4"><path d="M3 17V8c0-2 1.5-3.5 3.5-3.5h11C19.5 4.5 21 6 21 8v9z"/><path d="M3 10.5h18M9 4.5v6M15 4.5v6"/><circle cx="7.5" cy="18" r="2" fill="#fff"/><circle cx="16.5" cy="18" r="2" fill="#fff"/></g></svg>
<div class="a" style="left:119.00px;top:384.55px;width:143.00px;height:0.70px;background:#d9dae0;"></div>
<div class="a" style="left:260.00px;top:383.10px;width:3.60px;height:3.60px;background:#777;border-radius:2px;"></div>
<div class="a" style="left:111.70px;top:395.00px;width:21.90px;height:8.80px;background:#f0f1f5;border-radius:2px;"></div>
<div class="t" style="top:397.40px;font-size:4.2px;color:#777;font-weight:normal;letter-spacing:-0.05px;left:-177.35px;width:600px;text-align:center;">Monday</div>
<div class="a" style="left:137.00px;top:395.00px;width:22.60px;height:8.80px;background:#f0f1f5;border-radius:2px;"></div>
<div class="t" style="top:397.40px;font-size:4.2px;color:#777;font-weight:normal;letter-spacing:-0.05px;left:-151.70px;width:600px;text-align:center;">Tuesday</div>
<div class="a" style="left:163.50px;top:395.00px;width:28.90px;height:8.80px;background:#f0f1f5;border-radius:2px;"></div>
<div class="t" style="top:397.40px;font-size:4.2px;color:#777;font-weight:normal;letter-spacing:-0.05px;left:-122.05px;width:600px;text-align:center;">Wednesday</div>
<div class="a" style="left:196.00px;top:395.00px;width:24.50px;height:8.80px;background:#f0f1f5;border-radius:2px;"></div>
<div class="t" style="top:397.40px;font-size:4.2px;color:#777;font-weight:normal;letter-spacing:-0.05px;left:-91.75px;width:600px;text-align:center;">Thursday</div>
<div class="a" style="left:224.40px;top:395.00px;width:18.80px;height:8.80px;background:#f0f1f5;border-radius:2px;"></div>
<div class="t" style="top:397.40px;font-size:4.2px;color:#777;font-weight:normal;letter-spacing:-0.05px;left:-66.20px;width:600px;text-align:center;">Friday</div>
<div class="a" style="left:111.70px;top:407.70px;width:23.50px;height:8.80px;background:#f0f1f5;border-radius:2px;"></div>
<div class="t" style="top:410.10px;font-size:4.2px;color:#777;font-weight:normal;letter-spacing:-0.05px;left:-176.55px;width:600px;text-align:center;">Saturday</div>
<div class="a" style="left:139.00px;top:407.70px;width:20.60px;height:8.80px;background:#f0f1f5;border-radius:2px;"></div>
<div class="t" style="top:410.10px;font-size:4.2px;color:#777;font-weight:normal;letter-spacing:-0.05px;left:-150.70px;width:600px;text-align:center;">Sunday</div>
<div class="a" style="left:111.70px;top:420.20px;width:23.50px;height:9.20px;background:#f0f1f5;border-radius:2px;"></div>
<svg style="left:115.20px;top:422.10px;" width="5.4" height="5.4" viewBox="0 0 24 24" preserveAspectRatio="none"><g fill="none" stroke="#555" stroke-width="2.2"><path d="M12 22s-7-6.5-7-12a7 7 0 0 1 14 0c0 5.5-7 12-7 12z"/><circle cx="12" cy="10" r="2.8"/></g></svg>
<div class="t" style="top:422.80px;font-size:4.2px;color:#666;font-weight:normal;letter-spacing:-0.05px;left:122.70px;">Alain</div>
<div class="a" style="left:139.00px;top:420.20px;width:51.80px;height:9.20px;background:#f0f1f5;border-radius:2px;"></div>
<svg style="left:142.50px;top:422.10px;" width="5.4" height="5.4" viewBox="0 0 24 24" preserveAspectRatio="none"><g fill="none" stroke="#555" stroke-width="2.2"><path d="M3 17V8c0-2 1.5-3.5 3.5-3.5h11C19.5 4.5 21 6 21 8v9z"/><path d="M3 10.5h18M9 4.5v6M15 4.5v6"/><circle cx="7.5" cy="18" r="2" fill="#fff"/><circle cx="16.5" cy="18" r="2" fill="#fff"/></g></svg>
<div class="t" style="top:422.80px;font-size:4.2px;color:#666;font-weight:normal;letter-spacing:-0.05px;left:150.00px;">Toyota 192- LX-852</div>
<div class="a" style="left:194.70px;top:420.20px;width:38.10px;height:9.20px;background:#f0f1f5;border-radius:2px;"></div>
<svg style="left:198.20px;top:422.10px;" width="5.4" height="5.4" viewBox="0 0 24 24" preserveAspectRatio="none"><g fill="none" stroke="#555" stroke-width="2.2"><circle cx="12" cy="7.5" r="4.5"/><path d="M4 21.5v-1c0-3 2.5-5.5 5.5-5.5h5c3 0 5.5 2.5 5.5 5.5v1z"/></g></svg>
<div class="t" style="top:422.80px;font-size:4.2px;color:#666;font-weight:normal;letter-spacing:-0.05px;left:205.70px;">Waqas Khan</div>
<div class="a" style="left:111.70px;top:436.20px;width:154.30px;height:0.70px;background:#e6e7ec;"></div>
<svg style="left:111.6px;top:443.3px" width="16.8" height="16.8" viewBox="0 0 24 24"><defs><clipPath id="ca120451"><circle cx="12" cy="12" r="12"/></clipPath></defs><g clip-path="url(#ca120451)"><rect width="24" height="24" fill="#dfe3e0"/><rect x="1" y="7" width="5" height="11" fill="#4d6e50"/><rect x="17" y="2" width="7" height="20" fill="#f4f5f4"/><path d="M2 26C2 19 5 17 8 16.5L12 18 16 16.5C19 17 22 19 22 26Z" fill="#3a3344"/><ellipse cx="11.5" cy="10.8" rx="5" ry="6.2" fill="#8f5e4a"/><path d="M8 13C8.5 16.5 10 17.5 12 17.5S15.5 16.5 16 13C15 15 13.8 15.8 12 15.8S9 15 8 13Z" fill="#2a1e1a"/></g><circle cx="12" cy="12" r="11.5" fill="none" stroke="#8a86b8" stroke-width="1"/></svg>
<div class="t" style="top:443.80px;font-size:6.2px;color:#2d3358;font-weight:bold;letter-spacing:-0.1px;left:133.80px;">Route A</div>
<div class="t" style="top:451.05px;font-size:5.3px;color:#777;font-weight:normal;letter-spacing:-0.05px;left:133.80px;">Done 0/5</div>
<div class="a" style="left:240.20px;top:444.30px;width:25.40px;height:9.20px;background:#fdebe8;border-radius:3px;"></div>
<div class="t" style="top:446.40px;font-size:5px;color:#e0603f;font-weight:bold;letter-spacing:-0.05px;left:-47.10px;width:600px;text-align:center;">Pending</div>
<svg style="left:110.50px;top:464.80px;" width="7" height="5.6" viewBox="1 3 22 18" preserveAspectRatio="none"><g fill="none" stroke="#3a4470" stroke-width="2.4"><path d="M3 17V8c0-2 1.5-3.5 3.5-3.5h11C19.5 4.5 21 6 21 8v9z"/><path d="M3 10.5h18M9 4.5v6M15 4.5v6"/><circle cx="7.5" cy="18" r="2" fill="#fff"/><circle cx="16.5" cy="18" r="2" fill="#fff"/></g></svg>
<div class="a" style="left:119.00px;top:467.25px;width:143.00px;height:0.70px;background:#d9dae0;"></div>
<div class="a" style="left:260.00px;top:465.80px;width:3.60px;height:3.60px;background:#777;border-radius:2px;"></div>
<div class="a" style="left:111.70px;top:477.70px;width:21.90px;height:8.80px;background:#f0f1f5;border-radius:2px;"></div>
<div class="t" style="top:480.10px;font-size:4.2px;color:#777;font-weight:normal;letter-spacing:-0.05px;left:-177.35px;width:600px;text-align:center;">Monday</div>
<div class="a" style="left:137.00px;top:477.70px;width:22.60px;height:8.80px;background:#f0f1f5;border-radius:2px;"></div>
<div class="t" style="top:480.10px;font-size:4.2px;color:#777;font-weight:normal;letter-spacing:-0.05px;left:-151.70px;width:600px;text-align:center;">Tuesday</div>
<div class="a" style="left:163.50px;top:477.70px;width:28.90px;height:8.80px;background:#f0f1f5;border-radius:2px;"></div>
<div class="t" style="top:480.10px;font-size:4.2px;color:#777;font-weight:normal;letter-spacing:-0.05px;left:-122.05px;width:600px;text-align:center;">Wednesday</div>
<div class="a" style="left:196.00px;top:477.70px;width:24.50px;height:8.80px;background:#f0f1f5;border-radius:2px;"></div>
<div class="t" style="top:480.10px;font-size:4.2px;color:#777;font-weight:normal;letter-spacing:-0.05px;left:-91.75px;width:600px;text-align:center;">Thursday</div>
<div class="a" style="left:224.40px;top:477.70px;width:18.80px;height:8.80px;background:#f0f1f5;border-radius:2px;"></div>
<div class="t" style="top:480.10px;font-size:4.2px;color:#777;font-weight:normal;letter-spacing:-0.05px;left:-66.20px;width:600px;text-align:center;">Friday</div>
<div class="a" style="left:111.70px;top:490.40px;width:23.50px;height:8.80px;background:#f0f1f5;border-radius:2px;"></div>
<div class="t" style="top:492.80px;font-size:4.2px;color:#777;font-weight:normal;letter-spacing:-0.05px;left:-176.55px;width:600px;text-align:center;">Saturday</div>
<div class="a" style="left:139.00px;top:490.40px;width:20.60px;height:8.80px;background:#f0f1f5;border-radius:2px;"></div>
<div class="t" style="top:492.80px;font-size:4.2px;color:#777;font-weight:normal;letter-spacing:-0.05px;left:-150.70px;width:600px;text-align:center;">Sunday</div>
<div class="a" style="left:111.40px;top:502.90px;width:26.10px;height:9.20px;background:#f0f1f5;border-radius:2px;"></div>
<svg style="left:114.90px;top:504.80px;" width="5.4" height="5.4" viewBox="0 0 24 24" preserveAspectRatio="none"><g fill="none" stroke="#555" stroke-width="2.2"><path d="M12 22s-7-6.5-7-12a7 7 0 0 1 14 0c0 5.5-7 12-7 12z"/><circle cx="12" cy="10" r="2.8"/></g></svg>
<div class="t" style="top:505.50px;font-size:4.2px;color:#666;font-weight:normal;letter-spacing:-0.05px;left:122.40px;">ajman</div>
<div class="a" style="left:141.00px;top:502.90px;width:55.60px;height:9.20px;background:#f0f1f5;border-radius:2px;"></div>
<svg style="left:144.50px;top:504.80px;" width="5.4" height="5.4" viewBox="0 0 24 24" preserveAspectRatio="none"><g fill="none" stroke="#555" stroke-width="2.2"><path d="M3 17V8c0-2 1.5-3.5 3.5-3.5h11C19.5 4.5 21 6 21 8v9z"/><path d="M3 10.5h18M9 4.5v6M15 4.5v6"/><circle cx="7.5" cy="18" r="2" fill="#fff"/><circle cx="16.5" cy="18" r="2" fill="#fff"/></g></svg>
<div class="t" style="top:505.50px;font-size:4.2px;color:#666;font-weight:normal;letter-spacing:-0.05px;left:152.00px;">Suzuki 456- LKK-456</div>
<div class="a" style="left:200.30px;top:502.90px;width:27.30px;height:9.20px;background:#f0f1f5;border-radius:2px;"></div>
<svg style="left:203.80px;top:504.80px;" width="5.4" height="5.4" viewBox="0 0 24 24" preserveAspectRatio="none"><g fill="none" stroke="#555" stroke-width="2.2"><circle cx="12" cy="7.5" r="4.5"/><path d="M4 21.5v-1c0-3 2.5-5.5 5.5-5.5h5c3 0 5.5 2.5 5.5 5.5v1z"/></g></svg>
<div class="t" style="top:505.50px;font-size:4.2px;color:#666;font-weight:normal;letter-spacing:-0.05px;left:211.30px;">Asif Ali</div>
<div class="a" style="left:111.70px;top:518.90px;width:154.30px;height:0.70px;background:#e6e7ec;"></div>
</div></div>

<!-- PHONE -->
<div class="scr" id="ph" style="box-shadow:0 0 12px rgba(40,40,60,0.16);left:821px;top:117px;width:195px;height:422px;border-radius:17px">
<div class="in" style="left:-821px;top:-117px">
<div class="t" style="top:123.70px;font-size:7px;color:#555;font-weight:normal;letter-spacing:-0.1px;left:835.30px;">8:59</div>
<svg style="left:850.00px;top:123.50px;" width="6" height="7" viewBox="0 0 24 24" preserveAspectRatio="none"><path d="M12 2l8 3v6c0 5-3.5 9-8 11-4.5-2-8-6-8-11V5z" fill="none" stroke="#555" stroke-width="2.6"/><path d="M5 5l14 14" stroke="#555" stroke-width="2.4"/></svg>
<svg style="left:860.00px;top:123.50px;" width="5" height="7" viewBox="0 0 14 18" preserveAspectRatio="none"><path d="M3 0H11L14 3V18H3z" fill="#555"/></svg>
<div class="a" style="left:912.00px;top:121.00px;width:12.00px;height:12.00px;background:#000;border-radius:6px;"></div>
<svg style="left:981.00px;top:123.50px;" width="8" height="6.5" viewBox="0 0 15 12" preserveAspectRatio="none"><path d="M0 3C2.5 1 5 0 7.5 0S12.5 1 15 3L7.5 12z" fill="#555"/></svg>
<svg style="left:990.50px;top:124.00px;" width="5.5" height="5.5" viewBox="0 0 14 14" preserveAspectRatio="none"><path d="M14 0V14H0z" fill="none" stroke="#555" stroke-width="2.4"/></svg>
<div class="a" style="left:998.40px;top:123.00px;width:2.80px;height:7.00px;background:#555;border-radius:1px;"></div>
<div class="a" style="left:828.00px;top:144.00px;width:180.00px;height:120.00px;background:#343b58;border-radius:16px;"></div>
<div class="t" style="top:155.20px;font-size:8.6px;color:#fff;font-weight:bold;letter-spacing:-0.25px;left:838.00px;">Hi, Asif Ali</div>
<div class="t" style="top:172.90px;font-size:11.8px;color:#fff;font-weight:bold;letter-spacing:-0.3px;left:838.00px;">Your Deliveries</div>
<svg style="left:970px;top:151.4px" width="28" height="28" viewBox="0 0 24 24"><defs><clipPath id="ca984165"><circle cx="12" cy="12" r="12"/></clipPath></defs><g clip-path="url(#ca984165)"><rect width="24" height="24" fill="#dfe3e0"/><rect x="1" y="7" width="5" height="11" fill="#4d6e50"/><rect x="17" y="2" width="7" height="20" fill="#f4f5f4"/><path d="M2 26C2 19 5 17 8 16.5L12 18 16 16.5C19 17 22 19 22 26Z" fill="#3a3344"/><ellipse cx="11.5" cy="10.8" rx="5" ry="6.2" fill="#8f5e4a"/><path d="M8 13C8.5 16.5 10 17.5 12 17.5S15.5 16.5 16 13C15 15 13.8 15.8 12 15.8S9 15 8 13Z" fill="#2a1e1a"/></g><circle cx="12" cy="12" r="11.5" fill="none" stroke="#8a86b8" stroke-width="1"/></svg>
<div class="t" style="top:197.90px;font-size:11.8px;color:#fff;font-weight:bold;left:564.30px;width:600px;text-align:center;">5</div>
<div class="t" style="top:212.50px;font-size:8px;color:#fff;font-weight:normal;letter-spacing:-0.1px;left:564.30px;width:600px;text-align:center;">Pending</div>
<div class="t" style="top:197.90px;font-size:11.8px;color:#fff;font-weight:bold;left:617.00px;width:600px;text-align:center;">0</div>
<div class="t" style="top:212.50px;font-size:8px;color:#fff;font-weight:normal;letter-spacing:-0.1px;left:617.00px;width:600px;text-align:center;">Delivered</div>
<div class="t" style="top:197.90px;font-size:11.8px;color:#fff;font-weight:bold;left:670.00px;width:600px;text-align:center;">0</div>
<div class="t" style="top:212.50px;font-size:8px;color:#fff;font-weight:normal;letter-spacing:-0.1px;left:670.00px;width:600px;text-align:center;">Cancelled</div>
<div class="a" style="left:891.50px;top:195.50px;width:1.00px;height:25.50px;background:#d8dbe6;"></div>
<div class="a" style="left:943.30px;top:195.50px;width:1.00px;height:25.50px;background:#d8dbe6;"></div>
<div class="a" style="left:845.50px;top:230.40px;width:145.00px;height:24.20px;background:#fff;border-radius:13px;"></div>
<div class="t" style="top:238.60px;font-size:8px;color:#555;font-weight:normal;letter-spacing:-0.1px;left:618.00px;width:600px;text-align:center;">Start Route</div>
<div class="t" style="top:275.80px;font-size:9.4px;color:#1f1f1f;font-weight:bold;letter-spacing:-0.2px;left:829.20px;">Today Routes (1)</div>
<div class="a" style="left:828.60px;top:295.00px;width:179.40px;height:67.60px;background:#f4f4f5;border-radius:10px;"></div>
<div class="a" style="left:833.20px;top:300.20px;width:23.20px;height:23.20px;background:#fff;border-radius:12px;"></div>
<svg style="left:838.60px;top:305.60px;" width="12.4" height="12.4" viewBox="2 1.5 20 21" preserveAspectRatio="none"><g fill="none" stroke="#343a50" stroke-width="2.3" stroke-linejoin="round"><path d="M12 2.5l8.5 4.5v10L12 21.5 3.5 17V7z"/><path d="M3.5 7L12 11.5 20.5 7M12 11.5v10M7.5 4.8l8.5 4.5"/></g></svg>
<div class="t" style="top:301.65px;font-size:8.3px;color:#2a2a2a;font-weight:normal;letter-spacing:-0.1px;left:861.70px;">Route A</div>
<svg style="left:862.00px;top:311.30px;" width="8" height="8" viewBox="0 0 24 24" preserveAspectRatio="none"><g fill="none" stroke="#555" stroke-width="2"><path d="M12 22s-7-6.5-7-12a7 7 0 0 1 14 0c0 5.5-7 12-7 12z"/><circle cx="12" cy="10" r="2.8"/></g></svg>
<div class="t" style="top:311.75px;font-size:7.5px;color:#333;font-weight:normal;letter-spacing:-0.1px;left:873.30px;">ajman</div>
<div class="a" style="left:969.40px;top:298.50px;width:31.60px;height:18.00px;background:#fbf1e6;border-radius:5px;"></div>
<div class="t" style="top:304.30px;font-size:7px;color:#e0873a;font-weight:normal;letter-spacing:-0.1px;left:686.20px;width:600px;text-align:center;">Pending</div>
<div class="a" style="left:837.30px;top:328.30px;width:161.50px;height:0.70px;background:#e2e2e4;"></div>
<div class="a" style="left:894.00px;top:336.00px;width:0.80px;height:18.00px;background:#dcdcde;"></div>
<div class="a" style="left:942.00px;top:336.00px;width:0.80px;height:18.00px;background:#dcdcde;"></div>
<div class="a" style="left:856.00px;top:338.30px;width:4.60px;height:4.60px;background:#4ee3a8;border-radius:3px;"></div>
<div class="t" style="top:337.30px;font-size:7px;color:#333;font-weight:normal;left:864.30px;">0</div>
<div class="t" style="top:346.00px;font-size:7.2px;color:#222;font-weight:normal;letter-spacing:-0.15px;left:561.30px;width:600px;text-align:center;">Delievered</div>
<div class="a" style="left:912.70px;top:338.30px;width:4.60px;height:4.60px;background:#f05252;border-radius:3px;"></div>
<div class="t" style="top:337.30px;font-size:7px;color:#333;font-weight:normal;left:921.00px;">0</div>
<div class="t" style="top:346.00px;font-size:7.2px;color:#222;font-weight:normal;letter-spacing:-0.15px;left:618.00px;width:600px;text-align:center;">Cancelled</div>
<div class="a" style="left:969.10px;top:338.30px;width:4.60px;height:4.60px;background:#f3a24a;border-radius:3px;"></div>
<div class="t" style="top:337.30px;font-size:7px;color:#333;font-weight:normal;left:977.40px;">5</div>
<div class="t" style="top:346.00px;font-size:7.2px;color:#222;font-weight:normal;letter-spacing:-0.15px;left:674.40px;width:600px;text-align:center;">Pending</div>
<div class="a" style="left:821.00px;top:510.00px;width:195.00px;height:0.80px;background:#e5e5e8;"></div>
<svg style="left:863.30px;top:516.80px;" width="12.6" height="13.2" viewBox="0 0 12 12.6" preserveAspectRatio="none"><path d="M0.6 5.2L6 0.6 11.4 5.2V10.6C11.4 11.6 10.8 12.2 9.8 12.2H2.2C1.2 12.2 0.6 11.6 0.6 10.6Z" fill="#363c55" stroke="#363c55" stroke-width="0.8" stroke-linejoin="round"/><rect x="4" y="9.2" width="4" height="1.1" fill="#d6d8e2"/></svg>
<div class="a" style="left:964.20px;top:516.80px;width:5.20px;height:5.20px;background:#363c55;border-radius:3px;"></div>
<div class="a" style="left:961.80px;top:523.80px;width:10.20px;height:6.00px;background:#9a9a9c;border-radius:5px;"></div>
<div class="a" style="left:893.00px;top:532.30px;width:50.50px;height:1.40px;background:#555;border-radius:1px;"></div>
</div></div>

</body></html>
